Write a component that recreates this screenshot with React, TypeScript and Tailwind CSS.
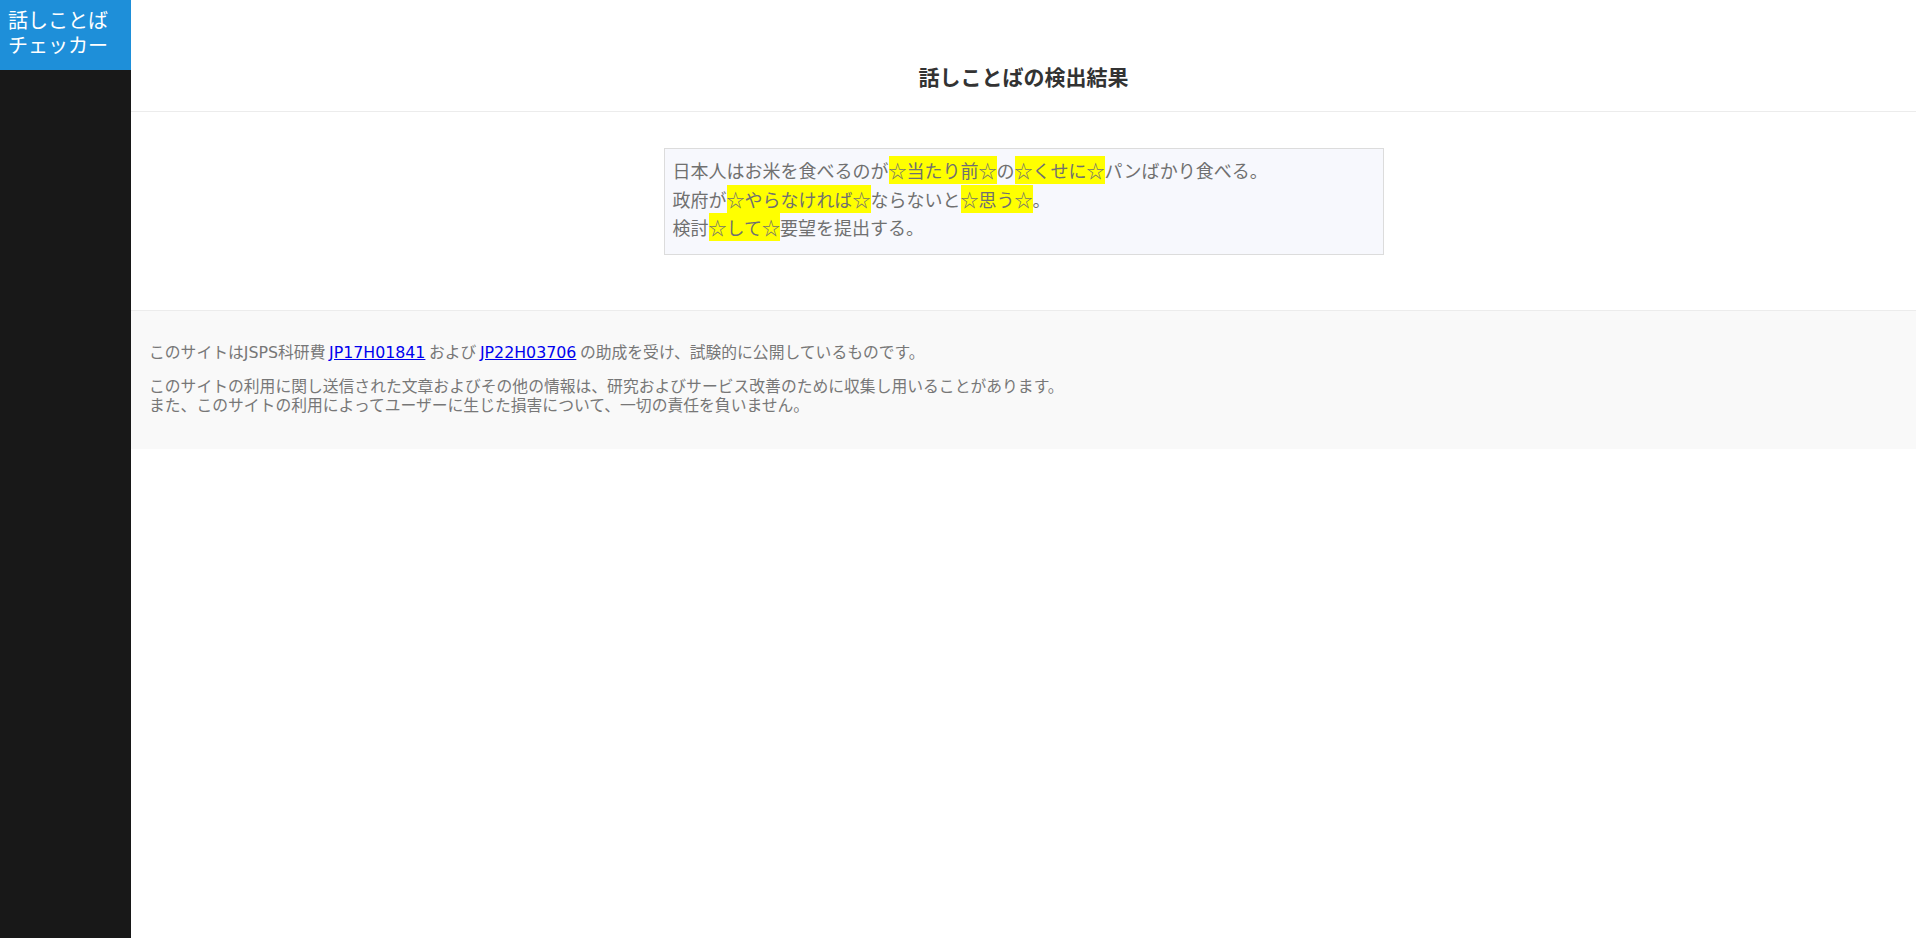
const Mark = ({ children }: { children: string }) => (
  <span className="bg-[#ffff00] py-px">{children}</span>
);

// Meiryo's latin glyphs are wide, DejaVu Sans is the closest match here
const Latin = ({ children }: { children: string }) => (
  <span className="font-['DejaVu_Sans',sans-serif]">{children}</span>
);

export default function App() {
  return (
    <div className="flex min-h-screen font-['Noto_Sans_CJK_JP','Noto_Sans',sans-serif]">
      <aside className="w-[131px] shrink-0 bg-[#181818]">
        <div className="h-[70px] bg-[#1e8fd9] px-2 pt-[8px] text-[20px] leading-[24.5px] text-white">
          話しことば
          <br />
          チェッカー
        </div>
      </aside>

      <main className="flex-1 bg-white">
        <header className="border-b border-[#ececec] pt-[61px] pb-[20px] text-center">
          <h1 className="text-[21px] font-bold leading-[30px] text-[#333]">
            話しことばの検出結果
          </h1>
        </header>

        <section className="pt-[36px] pb-[55px]">
          <div className="mx-auto w-[720px] border border-[#dcdcdc] bg-[#f7f8fd] px-2 pt-[7px] pb-[12px] text-[18px] leading-[28.5px] text-[#707070]">
            <div>
              日本人はお米を食べるのが<Mark>☆当たり前☆</Mark>の<Mark>☆くせに☆</Mark>
              パンばかり食べる。
            </div>
            <div>
              政府が<Mark>☆やらなければ☆</Mark>ならないと<Mark>☆思う☆</Mark>。
            </div>
            <div>
              検討<Mark>☆して☆</Mark>要望を提出する。
            </div>
          </div>
        </section>

        <footer className="border-t border-[#ececec] bg-[#f9f9f9] pl-[18px] pr-5 pt-[31px] pb-[35px] text-[15.8px] leading-[19px] text-[#777]">
          <p>
            このサイトは<Latin>JSPS</Latin>科研費{" "}
            <a href="#" className="text-[#0000ee] underline">
              <Latin>JP17H01841</Latin>
            </a>{" "}
            および{" "}
            <a href="#" className="text-[#0000ee] underline">
              <Latin>JP22H03706</Latin>
            </a>{" "}
            の助成を受け、試験的に公開しているものです。
          </p>
          <p className="mt-[14px]">
            このサイトの利用に関し送信された文章およびその他の情報は、研究およびサービス改善のために収集し用いることがあります。
            <br />
            また、このサイトの利用によってユーザーに生じた損害について、一切の責任を負いません。
          </p>
        </footer>
      </main>
    </div>
  );
}
